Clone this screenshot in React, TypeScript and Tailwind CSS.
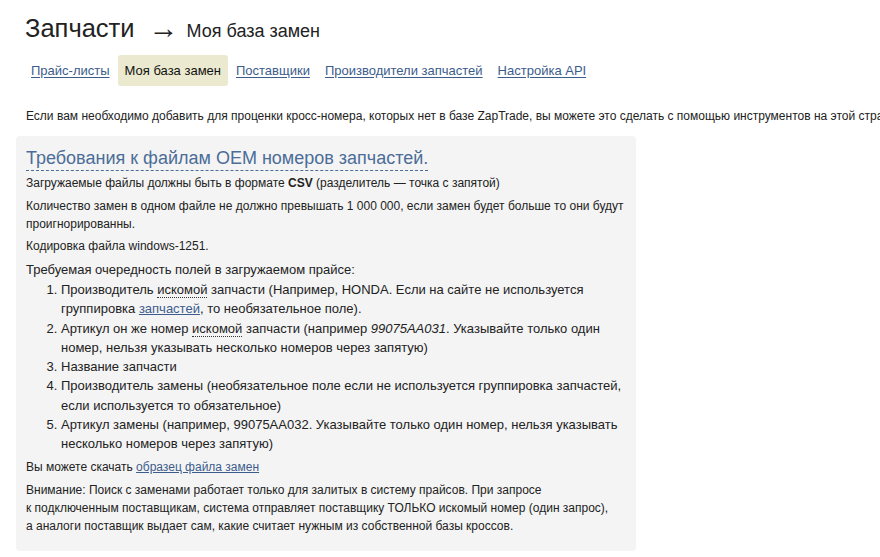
import React from 'react'

const font = { fontFamily: '"Liberation Sans", Arial, sans-serif' }

function Tabs() {
  const items = ['Прайс-листы', 'Моя база замен', 'Поставщики', 'Производители запчастей', 'Настройка API']
  return (
    <div className="flex items-center gap-[1px] pl-[24px] mt-[10px]">
      {items.map((t, i) =>
        i === 1 ? (
          <span key={t} className="px-[7px] h-[31px] flex items-center bg-[#ebe9cf] rounded-[3px] text-[13px] text-[#111]">
            {t}
          </span>
        ) : (
          <a key={t} className="px-[7px] h-[31px] flex items-center text-[13px] text-[#3c5c8c] underline underline-offset-2">
            {t}
          </a>
        )
      )}
    </div>
  )
}

function Dotted({ children }: { children: React.ReactNode }) {
  return <span className="border-b border-dotted border-[#333]">{children}</span>
}

export default function App() {
  return (
    <div style={font} className="w-[880px] h-[557px] overflow-hidden bg-white text-[#222]">
      <div className="flex items-baseline pl-[25px] pt-[11px]">
        <h1 className="text-[25.5px] leading-[34px] text-[#222]">Запчасти</h1>
        <span className="text-[30px] leading-none ml-[14px] mr-[8px] relative top-[1px]">→</span>
        <span className="text-[18px]">Моя база замен</span>
      </div>
      <Tabs />
      <p className="pl-[26px] mt-[21px] text-[12px] leading-[18px] whitespace-nowrap">
        Если вам необходимо добавить для проценки кросс-номера, которых нет в базе ZapTrade, вы можете это сделать с помощью инструментов на этой странице.
      </p>
      <div className="ml-[16px] mt-[11px] w-[620px] bg-[#f4f4f4] rounded-[4px] px-[10px] pt-[10px] pb-[16px] text-[12px] leading-[18px]">
        <h2 className="text-[18px] leading-[24px] text-[#4b6d98] inline-block border-b border-dashed border-[#4b6d98] mb-[3px]">
          Требования к файлам OEM номеров запчастей.
        </h2>
        <p className="mb-[5px]">
          Загружаемые файлы должны быть в формате <b>CSV</b> (разделитель — точка с запятой)
        </p>
        <p className="mb-[4px]">
          Количество замен в одном файле не должно превышать 1 000 000, если замен будет больше то они будут проигнорированны.
        </p>
        <p className="mb-[5px]">Кодировка файла windows-1251.</p>
        <p className="text-[13px] leading-[20px]">Требуемая очередность полей в загружаемом прайсе:</p>
        <ol className="list-decimal pl-[35px] text-[13px] leading-[19.3px] mb-[4px]">
          <li>
            Производитель <Dotted>искомой</Dotted> запчасти (Например, HONDA. Если на сайте не используется группировка{' '}
            <a className="text-[#3c5c8c] underline">запчастей</a>, то необязательное поле).
          </li>
          <li>
            Артикул он же номер <Dotted>искомой</Dotted> запчасти (например <i>99075AA031</i>. Указывайте только один номер, нельзя указывать несколько номеров через запятую)
          </li>
          <li>Название запчасти</li>
          <li>
            Производитель замены (необязательное поле если не используется группировка запчастей, если используется то обязательное)
          </li>
          <li>
            Артикул замены (например, 99075AA032. Указывайте только один номер, нельзя указывать несколько номеров через запятую)
          </li>
        </ol>
        <p className="mb-[5px]">
          Вы можете скачать <a className="text-[#3c5c8c] underline">образец файла замен</a>
        </p>
        <p>
          Внимание: Поиск с заменами работает только для залитых в систему прайсов. При запросе
          <br />к подключенным поставщикам, система отправляет поставщику ТОЛЬКО искомый номер (один запрос),
          <br />а аналоги поставщик выдает сам, какие считает нужным из собственной базы кроссов.
        </p>
      </div>
    </div>
  )
}
